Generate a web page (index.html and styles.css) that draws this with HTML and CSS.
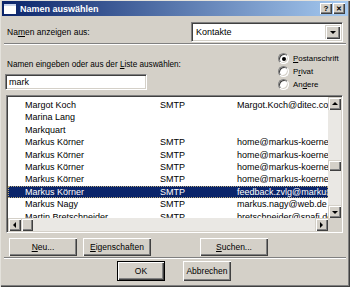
FILE: index.html
```html
<!DOCTYPE html>
<html lang="de">
<head>
    <meta charset="UTF-8">
    <title>Namen auswählen</title>
    <link rel="stylesheet" href="styles.css">
</head>
<body>

    <div class="window">
        <div class="titlebar">
            <span class="title-icon"></span>
            <span class="title-text">Namen auswählen</span>
            <span class="title-btn">?</span>
            <span class="title-btn close">&#x2715;</span>
        </div>

        <div class="content">
            <div class="show-row">
                <span class="label">Na<u>m</u>en anzeigen aus:</span>
                <div class="combo">
                    <span class="combo-text">Kontakte</span>
                    <span class="combo-btn"><span class="arrow-down"></span></span>
                </div>
            </div>

            <div class="etched"></div>

            <div class="search-row">
                <div class="search-col">
                    <span class="label">Namen eingeben oder aus der <u>L</u>iste auswählen:</span>
                    <div class="textbox">mark</div>
                </div>
                <div class="radios">
                    <div class="radio-item"><span class="radio checked"></span><u>P</u>ostanschrift</div>
                    <div class="radio-item"><span class="radio"></span>P<u>r</u>ivat</div>
                    <div class="radio-item"><span class="radio"></span>An<u>d</u>ere</div>
                </div>
            </div>

            <div class="listbox">
                <div class="list-main">
                    <div class="rows">
                        <div class="row"><span class="c-name">Margot Koch</span><span class="c-type">SMTP</span><span class="c-mail">Margot.Koch@ditec.com</span></div>
                        <div class="row"><span class="c-name">Marina Lang</span><span class="c-type"></span><span class="c-mail"></span></div>
                        <div class="row"><span class="c-name">Markquart</span><span class="c-type"></span><span class="c-mail"></span></div>
                        <div class="row"><span class="c-name">Markus Körner</span><span class="c-type">SMTP</span><span class="c-mail">home@markus-koerner.de</span></div>
                        <div class="row"><span class="c-name">Markus Körner</span><span class="c-type">SMTP</span><span class="c-mail">home@markus-koerner.de</span></div>
                        <div class="row"><span class="c-name">Markus Körner</span><span class="c-type">SMTP</span><span class="c-mail">home@markus-koerner.de</span></div>
                        <div class="row"><span class="c-name">Markus Körner</span><span class="c-type">SMTP</span><span class="c-mail">home@markus-koerner.de</span></div>
                        <div class="row selected"><span class="c-name">Markus Körner</span><span class="c-type">SMTP</span><span class="c-mail">feedback.zvlg@markus-koerner.de</span></div>
                        <div class="row"><span class="c-name">Markus Nagy</span><span class="c-type">SMTP</span><span class="c-mail">markus.nagy@web.de</span></div>
                        <div class="row"><span class="c-name">Martin Bretschneider</span><span class="c-type">SMTP</span><span class="c-mail">bretschneider@spafi.de</span></div>
                    </div>
                    <div class="vscroll">
                        <span class="sb-btn"><span class="arrow-up"></span></span>
                        <span class="sb-track">
                            <span class="sb-thumb v-thumb"></span>
                        </span>
                        <span class="sb-btn"><span class="arrow-down"></span></span>
                    </div>
                </div>
                <div class="hscroll">
                    <span class="sb-btn"><span class="arrow-left"></span></span>
                    <span class="sb-thumb h-thumb"></span>
                    <span class="sb-track"></span>
                    <span class="sb-btn"><span class="arrow-right"></span></span>
                    <span class="sb-corner"></span>
                </div>
            </div>

            <div class="button-row">
                <button class="btn"><u>N</u>eu...</button>
                <button class="btn"><u>E</u>igenschaften</button>
                <button class="btn btn-search"><u>S</u>uchen...</button>
            </div>

            <div class="etched"></div>

            <div class="footer">
                <button class="btn btn-default">OK</button>
                <button class="btn btn-cancel">Abbrechen</button>
            </div>
        </div>
    </div>

</body>
</html>
```

FILE: styles.css
```css
html, body {
    margin: 0;
    padding: 0;
}

body {
    width: 350px;
    height: 287px;
    overflow: hidden;
    font-family: "Liberation Sans", Arial, sans-serif;
    font-size: 8.5px;
    color: #000;
}

u {
    text-decoration: underline;
    text-underline-offset: 1px;
}

.window {
    box-sizing: border-box;
    width: 350px;
    height: 287px;
    padding: 1px 2px 2px 2px;
    background: #d4d0c8;
    box-shadow: inset 1px 1px 0 #e4e2dc, inset -1px -1px 0 #404040, inset -2px -2px 0 #808080;
}

/* title bar */
.titlebar {
    display: flex;
    align-items: center;
    height: 15px;
    padding: 0 3px 0 2px;
    background: linear-gradient(to right, #0a246a, #a6caf0);
}

.title-icon {
    width: 12px;
    height: 8px;
    background: #fff;
    border-top: 2px solid #c8d4ec;
    margin-right: 4px;
}

.title-text {
    flex: 1;
    color: #fff;
    font-weight: bold;
    font-size: 9px;
}

.title-btn {
    box-sizing: border-box;
    width: 12px;
    height: 11px;
    display: flex;
    align-items: center;
    justify-content: center;
    background: #d4d0c8;
    font-weight: bold;
    font-size: 8px;
    line-height: 1;
    box-shadow: inset 1px 1px 0 #fff, inset -1px -1px 0 #404040, inset -2px -2px 0 #808080;
}

.title-btn.close {
    margin-left: 1px;
    font-size: 7px;
}

.content {
    padding: 0 5px 0 3px;
}

.label {
    padding-left: 2px;
}

/* first row */
.show-row {
    display: flex;
    align-items: center;
    justify-content: space-between;
    margin-top: 6px;
}

.combo {
    box-sizing: border-box;
    display: flex;
    align-items: center;
    width: 152px;
    height: 20px;
    background: #fff;
    border-top: 1px solid #808080;
    border-left: 1px solid #808080;
    border-right: 1px solid #fff;
    border-bottom: 1px solid #fff;
    box-shadow: inset 1px 1px 0 #404040, inset -1px -1px 0 #d4d0c8;
    padding: 2px;
}

.combo-text {
    flex: 1;
    padding-left: 2px;
    font-size: 9px;
}

.combo-btn {
    box-sizing: border-box;
    width: 15px;
    height: 14px;
    display: flex;
    align-items: center;
    justify-content: center;
    background: #d4d0c8;
    box-shadow: inset 1px 1px 0 #d4d0c8, inset 2px 2px 0 #fff, inset -1px -1px 0 #404040, inset -2px -2px 0 #808080;
}

.etched {
    height: 0;
    border-top: 1px solid #808080;
    border-bottom: 1px solid #fff;
    margin: 1px -3px 0 -1px;
}

/* search row */
.search-row {
    display: flex;
    justify-content: space-between;
}

.search-col {
    display: flex;
    flex-direction: column;
    margin-top: 15px;
}

.search-col .label {
    font-size: 8.2px;
    line-height: 10px;
}

.textbox {
    box-sizing: border-box;
    width: 142px;
    height: 16px;
    margin-top: 4px;
    padding: 2px 3px;
    background: #fff;
    font-size: 9px;
    line-height: 11px;
    border-top: 1px solid #808080;
    border-left: 1px solid #808080;
    border-right: 1px solid #fff;
    border-bottom: 1px solid #fff;
    box-shadow: inset 1px 1px 0 #404040, inset -1px -1px 0 #d4d0c8;
}

.radios {
    margin-top: 7px;
    width: 65px;
}

.radio-item {
    display: flex;
    align-items: center;
    height: 13px;
    font-size: 7.9px;
    white-space: nowrap;
}

.radio {
    box-sizing: border-box;
    position: relative;
    flex: none;
    width: 11px;
    height: 11px;
    margin-right: 4px;
    border-radius: 50%;
    background: #fff;
    border: 1px solid;
    border-color: #808080 #fff #fff #808080;
    box-shadow: inset 1px 1px 0 #404040, inset -1px -1px 0 #d4d0c8;
}

.radio.checked::after {
    content: "";
    position: absolute;
    left: 2.5px;
    top: 2.5px;
    width: 4px;
    height: 4px;
    border-radius: 50%;
    background: #000;
}

/* list */
.listbox {
    box-sizing: border-box;
    height: 138px;
    margin: 4px 0 0 1px;
    background: #fff;
    border-top: 1px solid #808080;
    border-left: 1px solid #808080;
    border-right: 1px solid #fff;
    border-bottom: 1px solid #fff;
    box-shadow: inset 1px 1px 0 #404040, inset -1px -1px 0 #d4d0c8;
    padding: 1px;
    display: flex;
    flex-direction: column;
}

.list-main {
    flex: 1;
    display: flex;
    min-height: 0;
}

.rows {
    flex: 1;
    overflow: hidden;
    padding-top: 2px;
}

.row {
    display: flex;
    height: 12.4px;
    line-height: 12.4px;
    font-size: 9px;
    white-space: nowrap;
}

.row.selected {
    background: #0a246a;
    color: #fff;
    outline: 1px dotted #b8a878;
    outline-offset: -1px;
}

.c-name {
    width: 135px;
    flex: none;
    padding-left: 17px;
}

.c-type {
    width: 77px;
    flex: none;
}

.c-mail {
    flex: none;
}

.vscroll {
    width: 13px;
    display: flex;
    flex-direction: column;
    background: #eae8e4;
}

.sb-btn {
    box-sizing: border-box;
    flex: none;
    width: 13px;
    height: 13px;
    display: flex;
    align-items: center;
    justify-content: center;
    background: #d4d0c8;
    box-shadow: inset 1px 1px 0 #d4d0c8, inset 2px 2px 0 #fff, inset -1px -1px 0 #404040, inset -2px -2px 0 #808080;
}

.sb-track {
    flex: 1;
    display: block;
    background: #eae8e4;
}

.v-thumb {
    margin-top: 50px;
}

.sb-thumb {
    box-sizing: border-box;
    display: block;
    width: 13px;
    height: 11px;
    background: #d4d0c8;
    box-shadow: inset 1px 1px 0 #d4d0c8, inset 2px 2px 0 #fff, inset -1px -1px 0 #404040, inset -2px -2px 0 #808080;
}

.hscroll {
    display: flex;
    height: 13px;
    background: #eae8e4;
}

.h-thumb {
    width: 12px;
    height: 13px;
}

.sb-corner {
    width: 13px;
    background: #d4d0c8;
}

.arrow-down, .arrow-up, .arrow-left, .arrow-right {
    width: 0;
    height: 0;
    border: 3px solid transparent;
}

.arrow-down {
    border-top: 3px solid #000;
    border-bottom: 0;
    margin-top: 1px;
}

.arrow-up {
    border-bottom: 3px solid #000;
    border-top: 0;
}

.arrow-left {
    border-right: 3px solid #000;
    border-left: 0;
}

.arrow-right {
    border-left: 3px solid #000;
    border-right: 0;
}

/* buttons */
.btn {
    box-sizing: border-box;
    height: 18px;
    padding: 0;
    font-family: "Liberation Sans", Arial, sans-serif;
    font-size: 8.5px;
    color: #000;
    background: #d4d0c8;
    border: none;
    box-shadow: inset 1px 1px 0 #fff, inset -1px -1px 0 #404040, inset -2px -2px 0 #808080;
}

.button-row {
    display: flex;
    gap: 6px;
    margin-top: 5px;
    padding-left: 4px;
}

.button-row .btn {
    width: 68px;
}

.button-row .btn-search {
    margin-left: 43px;
}

.footer {
    display: flex;
    gap: 18px;
    margin-top: 2px;
    padding-left: 112px;
}

.footer .btn {
    width: 48px;
    height: 20px;
}

.btn-default {
    border: 1px solid #000;
}
```
